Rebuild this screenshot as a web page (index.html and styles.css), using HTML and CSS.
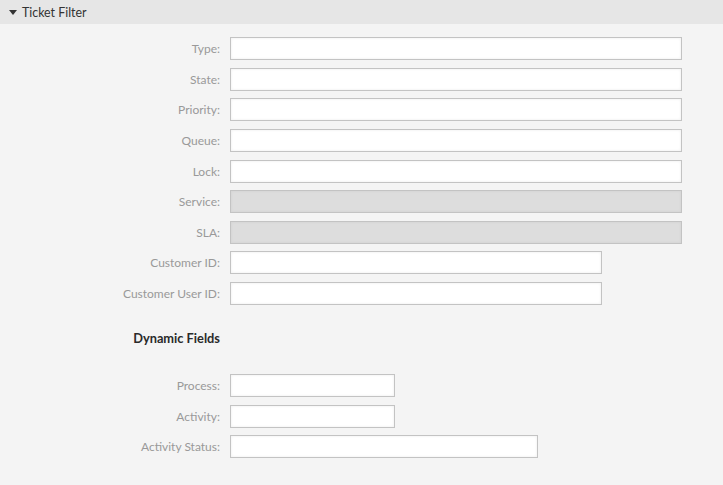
FILE: index.html
```html
<!DOCTYPE html>
<html>
<head>
<meta charset="utf-8">
<link rel="stylesheet" href="styles.css">
</head>
<body>
<div class="widget">
  <div class="header">
    <span class="caret"></span>
    <span class="title">Ticket Filter</span>
  </div>
  <div class="content">
    <div class="grid">
      <label>Type:</label><div class="input full"></div>
      <label>State:</label><div class="input full"></div>
      <label>Priority:</label><div class="input full"></div>
      <label>Queue:</label><div class="input full"></div>
      <label>Lock:</label><div class="input full"></div>
      <label>Service:</label><div class="input full disabled"></div>
      <label>SLA:</label><div class="input full disabled"></div>
      <label>Customer ID:</label><div class="input medium"></div>
      <label>Customer User ID:</label><div class="input medium"></div>
    </div>
    <div class="section-title">Dynamic Fields</div>
    <div class="grid">
      <label>Process:</label><div class="input small"></div>
      <label>Activity:</label><div class="input small"></div>
      <label>Activity Status:</label><div class="input status"></div>
    </div>
  </div>
</div>
</body>
</html>
```

FILE: styles.css
```css
html, body {
  margin: 0;
  padding: 0;
  background: #f4f4f4;
  font-family: Lato, "Liberation Sans", sans-serif;
}
.widget {
  width: 723px;
  height: 485px;
  background: #f4f4f4;
}
.header {
  height: 24px;
  background: #e6e6e6;
  display: flex;
  align-items: center;
  padding-left: 9px;
  box-sizing: border-box;
}
.caret {
  width: 0;
  height: 0;
  border-left: 4.5px solid transparent;
  border-right: 4.5px solid transparent;
  border-top: 5px solid #333;
  margin-right: 5px;
  margin-top: 1px;
}
.title {
  font-size: 12.4px;
  color: #333;
}
.content {
  padding-top: 13px;
}
.grid {
  display: grid;
  grid-template-columns: 220px auto;
  column-gap: 10px;
  row-gap: 7.625px;
  justify-items: start;
}
.grid label {
  justify-self: end;
  font-size: 12px;
  color: #999;
  line-height: 23px;
  height: 23px;
}
.input {
  height: 23px;
  box-sizing: border-box;
  border: 1px solid #c3c3c3;
  background: #fff;
  box-shadow: inset 0 0 3px rgba(0,0,0,0.08);
}
.input.disabled {
  background: #ddd;
  box-shadow: inset 0 0 3px rgba(0,0,0,0.06);
}
.full { width: 452px; }
.medium { width: 372px; }
.small { width: 165px; }
.status { width: 308px; }
.section-title {
  width: 220px;
  text-align: right;
  font-size: 12.8px;
  font-weight: bold;
  color: #2a2a2a;
  line-height: 16px;
  margin-top: 25px;
  margin-bottom: 28px;
}
```
